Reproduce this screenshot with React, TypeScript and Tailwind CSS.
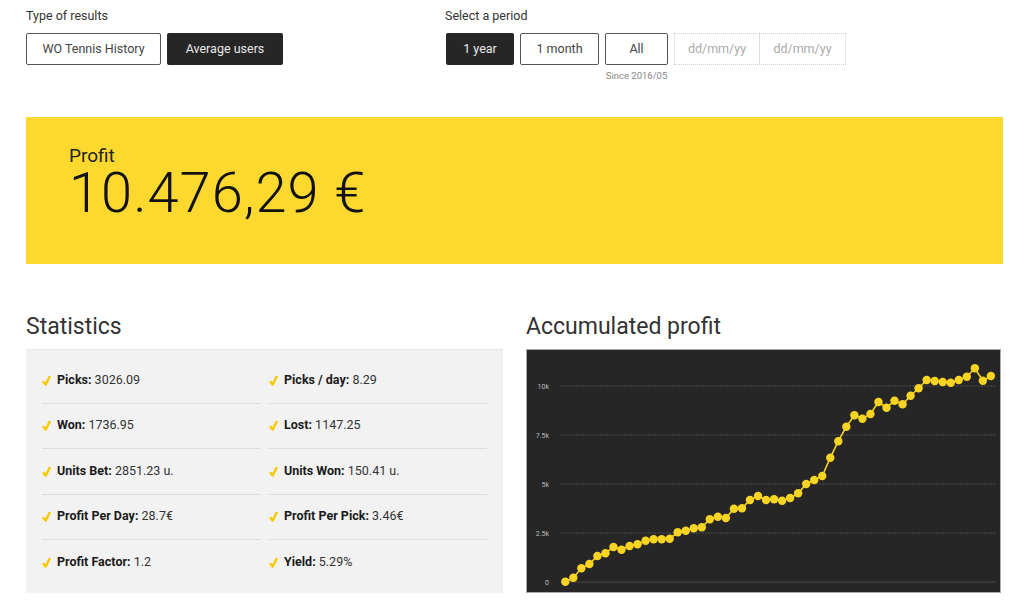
const font = "font-['Roboto','Liberation_Sans',sans-serif]";

const stats: [string, string, string, string][] = [
  ['Picks:', '3026.09', 'Picks / day:', '8.29'],
  ['Won:', '1736.95', 'Lost:', '1147.25'],
  ['Units Bet:', '2851.23 u.', 'Units Won:', '150.41 u.'],
  ['Profit Per Day:', '28.7€', 'Profit Per Pick:', '3.46€'],
  ['Profit Factor:', '1.2', 'Yield:', '5.29%'],
];

// y positions (px inside chart box) of each monthly point
const ys = [
  231.7, 227.7, 218.3, 214, 206, 203.3, 197, 199.7, 196, 194.3, 190.7, 189.3, 189.3, 188.7, 182.3, 180.7, 178.3,
  177.3, 169.3, 166.7, 168, 158.7, 158.3, 150, 146, 150, 149.3, 150.7, 148, 143.3, 134, 130, 126, 107.7, 91.2, 76.7,
  65.3, 68.7, 64, 52, 57.7, 50.7, 54.3, 45.7, 38.3, 30, 31, 32, 32.7, 30, 26.7, 18.3, 30.7, 26,
];

const grid = [
  { label: '10k', y: 36 },
  { label: '7.5k', y: 85 },
  { label: '5k', y: 134 },
  { label: '2.5k', y: 183 },
  { label: '0', y: 232 },
];

function Check() {
  return (
    <svg width="9" height="11" viewBox="0 0 9 11" className="shrink-0">
      <path d="M1 6.2 L3.6 9.6 L8 1" fill="none" stroke="#f7c900" strokeWidth="2.4" strokeLinejoin="round" />
    </svg>
  );
}

function Chart() {
  const pts = ys.map((y, i) => [38.3 + i * 8.03, y] as const);
  const d = pts.map(([x, y], i) => `${i ? 'L' : 'M'}${x.toFixed(1)} ${y}`).join(' ');
  return (
    <div className="h-[244px] border border-[#a9a9a9] bg-[#262626]">
      <svg width="473" height="242" viewBox="0 0 473 242" className="block">
        {grid.map((g) => (
          <g key={g.label}>
            <line
              x1="34"
              x2="469"
              y1={g.y}
              y2={g.y}
              stroke={g.label === '0' ? '#4a4a48' : '#4d4d4a'}
              strokeDasharray={g.label === '0' ? undefined : '2 1'}
            />
            <text x="22" y={g.y + 3} textAnchor="end" fontSize="7" fill="#bdbdbd" fontFamily="Roboto, sans-serif">
              {g.label}
            </text>
          </g>
        ))}
        <path d={d} fill="none" stroke="#f9d423" strokeWidth="1.6" />
        {pts.map(([x, y], i) => (
          <circle key={i} cx={x} cy={y} r="4.2" fill="#f9d423" />
        ))}
      </svg>
    </div>
  );
}

export default function App() {
  return (
    <div className={`${font} w-[1024px] h-[609px] bg-white text-[#2a2a2a] overflow-hidden`}>
      <div className="flex pl-[26px] pt-[8px] h-[87px]">
        <div className="w-[419px]">
          <div className="text-[12.5px] text-[#333] leading-[16px]">Type of results</div>
          <div className="flex gap-[6px] mt-[9px]">
            <button className="h-[32px] w-[135px] border border-[#555] rounded-[2px] text-[12.5px] text-[#444]">
              WO Tennis History
            </button>
            <button className="h-[32px] w-[116px] bg-[#262626] rounded-[2px] text-[12.5px] text-[#e8e8e8]">
              Average users
            </button>
          </div>
        </div>
        <div>
          <div className="text-[12.5px] text-[#333] leading-[16px]">Select a period</div>
          <div className="flex gap-[6px] mt-[9px] ml-px">
            <button className="h-[32px] w-[68px] bg-[#262626] rounded-[2px] text-[12.5px] text-[#e8e8e8]">1 year</button>
            <button className="h-[32px] w-[79px] border border-[#555] rounded-[2px] text-[12.5px] text-[#444]">
              1 month
            </button>
            <div className="flex flex-col items-center">
              <button className="h-[32px] w-[63px] border border-[#555] rounded-[2px] text-[12.5px] text-[#444]">All</button>
              <div className="text-[9.5px] text-[#888] mt-[5px] leading-[11px] whitespace-nowrap">Since 2016/05</div>
            </div>
            <div className="flex h-[32px] border border-dotted border-[#d0d0d0]">
              <div className="w-[85px] flex items-center justify-center text-[12.5px] text-[#aaa] border-r border-[#ddd]">
                dd/mm/yy
              </div>
              <div className="w-[85px] flex items-center justify-center text-[12.5px] text-[#aaa]">dd/mm/yy</div>
            </div>
          </div>
        </div>
      </div>

      <div className="ml-[26px] mr-[21px] mt-[30px] h-[147px] bg-[#fdd92f] pl-[43px] pt-[28px]">
        <div className="text-[19px] leading-[22px] text-[#222]">Profit</div>
        <div className="text-[56px] leading-[52px] tracking-[1px] text-[#111] font-light">10.476,29 €</div>
      </div>

      <div className="flex gap-[23px] pl-[26px] mt-[50px]">
        <div className="w-[477px] shrink-0">
          <div className="text-[23px] leading-[26px] text-[#333]">Statistics</div>
          <div className="mt-[9px] bg-[#f2f2f2] h-[244px] border-t border-dotted border-[#ddd] px-[16px] pt-[8px] grid grid-cols-2 gap-x-[9px] content-start">
            {stats.map((row, i) =>
              [0, 2].map((k) => (
                <div
                  key={`${i}-${k}`}
                  className={`flex items-center gap-[6px] h-[45.5px] text-[12.5px] ${
                    i < 4 ? 'border-b border-[#dcdcdc]' : ''
                  }`}
                >
                  <Check />
                  <span>
                    <b className="font-bold text-[#1a1a1a]">{row[k]}</b> <span className="text-[#333]">{row[k + 1]}</span>
                  </span>
                </div>
              ))
            )}
          </div>
        </div>
        <div className="w-[475px] shrink-0">
          <div className="text-[23px] leading-[26px] text-[#333]">Accumulated profit</div>
          <div className="mt-[9px]">
            <Chart />
          </div>
        </div>
      </div>
    </div>
  );
}
